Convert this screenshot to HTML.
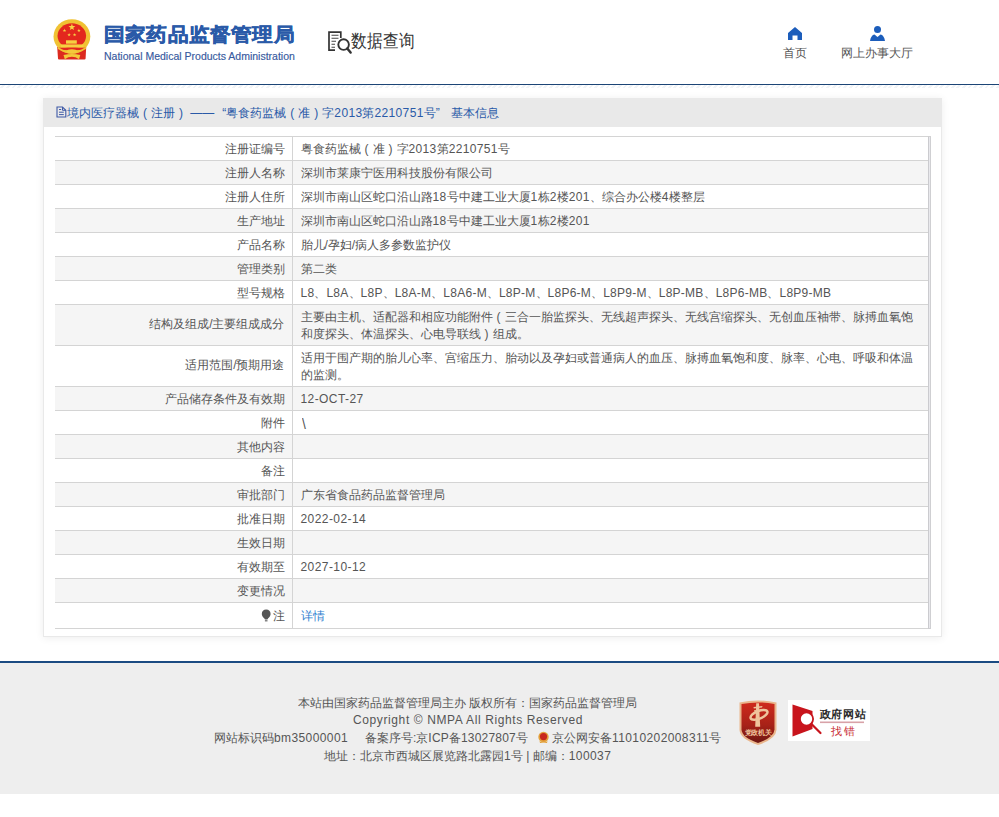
<!DOCTYPE html>
<html><head><meta charset="utf-8">
<style>
*{margin:0;padding:0;box-sizing:border-box}
html,body{width:999px;height:817px;overflow:hidden;background:#fff;font-family:"Liberation Sans",sans-serif;color:#555}
.abs{position:absolute}
#hdr{position:absolute;left:0;top:0;width:999px;height:84px;background:#fff}
#hline{position:absolute;left:0;top:84px;width:999px;height:1px;background:#1c4576}
#hstripe{position:absolute;left:0;top:85px;width:999px;height:3px;background:repeating-linear-gradient(135deg,#fff 0 2px,#f1f4f7 2px 4px)}
.title{left:104px;top:21px;font-size:21px;font-weight:bold;color:#2a5aa8;-webkit-text-stroke:0.5px #2a5aa8;letter-spacing:0.2px;white-space:nowrap;line-height:26px;transform:scaleY(0.92);transform-origin:0 23px}
.en{left:104px;top:50px;font-size:10.5px;color:#36599e;-webkit-text-stroke:0.15px #36599e;white-space:nowrap;line-height:13px}
.sj{left:351px;top:29px;font-size:16px;color:#333;white-space:nowrap;line-height:22px;transform:scaleY(1.15);transform-origin:0 0}
.nav{font-size:12px;color:#555;white-space:nowrap;line-height:14px}
#panel{position:absolute;left:43px;top:98px;width:899px;height:539px;background:#fff;border:1px solid #e9e9e9;border-top:0;box-shadow:0 1px 8px rgba(0,0,0,0.075)}
#ph{position:absolute;left:-1px;top:0;width:899px;height:29px;background:#e9e9e9}
#ptitle{position:absolute;left:23px;top:7px;font-size:12px;color:#2a5aa8;white-space:nowrap;line-height:16px}
#tbl{position:absolute;left:55px;top:136px;border-collapse:collapse;font-size:12px;color:#555}
#tbl td{border-top:1px solid #d4d4d4;border-bottom:1px solid #d4d4d4;line-height:17px;vertical-align:middle;padding-top:2px}
#tbl td.l{width:237px;text-align:right;padding-right:7px;border-right:1px solid #d4d4d4}
#tbl td.r{width:637px;padding-left:8px;padding-right:8px;border-right:1px solid #d4d4d4}
#tbl tr.g td{background:#f5f5f5}
#tbl tr.h24 td{height:24px}
#tbl tr.h41 td{height:41px}
#tbl tr.h41 td.l{padding-top:0;padding-bottom:1px}
#tbl tr.h26 td{height:26px}
#rstrip{position:absolute;left:928px;top:136px;width:3px;height:493px;background:#e9e9ed;border-left:1px solid #cbcbcf;border-right:1px solid #cfcfd2;border-bottom:1px solid #cfcfd2;border-top:1px solid #d2d2d2}
#foot{position:absolute;left:0;top:661px;width:999px;height:133px;background:#eeeeee;border-top:2px solid #1b4b82}
.ft{position:absolute;font-size:12px;color:#555;white-space:nowrap;line-height:18px}
.pl,.pr{display:inline-block;width:12px;text-align:center;font-style:normal}
.q1,.q2{display:inline-block;width:12px;font-style:normal}.q1{text-align:right}
b.n{font-weight:normal;letter-spacing:0.26px}b.d{font-weight:normal;letter-spacing:0.36px}
</style></head><body>
<div id="hdr">
  <!-- emblem -->
  <svg class="abs" style="left:48px;top:14px" width="48" height="50" viewBox="0 0 48 50">
    <path d="M9.2 33 L38.2 33 L37.6 44.5 Q37.5 45.5 36.5 45.5 L11 45.5 Q10 45.5 10 44.5 Z" fill="#dc2a1f"/>
    <ellipse cx="23.9" cy="22.5" rx="18.4" ry="17.3" fill="#f0c233"/>
    <ellipse cx="23.8" cy="21.8" rx="14.3" ry="12.6" fill="#e3281e"/>
    <polygon points="23.90,9.60 24.75,12.04 27.32,12.09 25.27,13.64 26.02,16.11 23.90,14.64 21.78,16.11 22.53,13.64 20.48,12.09 23.05,12.04" fill="#f6d445"/>
    <polygon points="16.50,14.60 16.95,15.89 18.31,15.91 17.22,16.73 17.62,18.04 16.50,17.26 15.38,18.04 15.78,16.73 14.69,15.91 16.05,15.89" fill="#f6d445"/>
    <polygon points="30.90,14.60 31.35,15.89 32.71,15.91 31.62,16.73 32.02,18.04 30.90,17.26 29.78,18.04 30.18,16.73 29.09,15.91 30.45,15.89" fill="#f6d445"/>
    <polygon points="21.10,18.90 21.55,20.19 22.91,20.21 21.82,21.03 22.22,22.34 21.10,21.56 19.98,22.34 20.38,21.03 19.29,20.21 20.65,20.19" fill="#f6d445"/>
    <polygon points="26.60,18.90 27.05,20.19 28.41,20.21 27.32,21.03 27.72,22.34 26.60,21.56 25.48,22.34 25.88,21.03 24.79,20.21 26.15,20.19" fill="#f6d445"/>
    <rect x="18" y="26.3" width="10.8" height="3.4" fill="#f6d040"/>
    <rect x="12.9" y="30.4" width="22.6" height="3.3" fill="#f6d040"/>
    <rect x="11" y="33.7" width="26" height="2.4" fill="#e3281e"/>
    <path d="M10 34 Q23.9 43 37.8 34" fill="none" stroke="#f0c233" stroke-width="1.8"/>
    <ellipse cx="23.9" cy="37.4" rx="5" ry="2.2" fill="#f3c93a"/>
    <path d="M15.5 41 Q23.9 39 32.3 41 L31 45.3 L27.5 43.2 Q23.9 42.4 20.3 43.2 L16.8 45.3 Z" fill="#f3c93a"/>
  </svg>
  <div class="abs title">国家药品监督管理局</div>
  <div class="abs en">National Medical Products Administration</div>
  <!-- data query icon -->
  <svg class="abs" style="left:327px;top:30px" width="25" height="25" viewBox="0 0 25 25">
    <path d="M13.8 8 V2.2 H2 V20.2 H8" fill="none" stroke="#333" stroke-width="1.7"/>
    <path d="M4.5 5.2 H11.5 M4.5 8.2 H11.5 M4.5 11.2 H9 M4.5 14.2 H8 M4.5 17.2 H8" stroke="#444" stroke-width="1.1"/>
    <circle cx="16.6" cy="14.6" r="5.3" fill="none" stroke="#333" stroke-width="1.9"/>
    <path d="M20.3 18.4 L23.6 22.6" stroke="#333" stroke-width="2.4" stroke-linecap="round"/>
  </svg>
  <div class="abs sj">数据查询</div>
  <!-- home -->
  <svg class="abs" style="left:788px;top:27px" width="14" height="13" viewBox="0 0 14 13">
    <path d="M7 0 L14 6 V13 H9.5 V8.5 H4.5 V13 H0 V6 Z" fill="#1c5dbb"/>
  </svg>
  <div class="abs nav" style="left:783px;top:46px">首页</div>
  <!-- person -->
  <svg class="abs" style="left:870px;top:26px" width="15" height="15" viewBox="0 0 15 15">
    <circle cx="7.5" cy="3.5" r="3.5" fill="#1c5dbb"/>
    <path d="M0 15 Q1 9 4.5 8.5 L7.5 11 L10.5 8.5 Q14 9 15 15 Z" fill="#1c5dbb"/>
  </svg>
  <div class="abs nav" style="left:841px;top:46px">网上办事大厅</div>
</div>
<div id="hline"></div>
<div id="hstripe"></div>

<div id="panel">
  <div id="ph"></div>
  <svg class="abs" style="left:12px;top:8px" width="11" height="12" viewBox="0 0 11 12">
    <path d="M1 1 H6.5 L9.8 4.3 V11 H1 Z" fill="none" stroke="#3f5aa6" stroke-width="1.1"/>
    <path d="M6.5 1 V4.3 H9.8" fill="none" stroke="#3f5aa6" stroke-width="1"/>
    <path d="M3 3.5 H5.2 M3 6.2 H7.8 M3 8.6 H7.8" stroke="#3f5aa6" stroke-width="1"/>
  </svg>
  <div id="ptitle">境内医疗器械<i class="pl">(</i>注册<i class="pr">)</i> ——<i class="q1">“</i>粤食药监械<i class="pl">(</i>准<i class="pr">)</i>字<b class="d">2013</b>第<b class="d">2210751</b>号<i class="q2">”</i> 基本信息</div>
</div>

<table id="tbl">
<tr class="h24"><td class="l">注册证编号</td><td class="r">粤食药监械<i class="pl">(</i>准<i class="pr">)</i>字<b class="d">2013</b>第<b class="d">2210751</b>号</td></tr>
<tr class="h24 g"><td class="l">注册人名称</td><td class="r">深圳市莱康宁医用科技股份有限公司</td></tr>
<tr class="h24"><td class="l">注册人住所</td><td class="r">深圳市南山区蛇口沿山路<b class="d">18</b>号中建工业大厦<b class="d">1</b>栋<b class="d">2</b>楼<b class="d">201</b>、综合办公楼<b class="d">4</b>楼整层</td></tr>
<tr class="h24 g"><td class="l">生产地址</td><td class="r">深圳市南山区蛇口沿山路<b class="d">18</b>号中建工业大厦<b class="d">1</b>栋<b class="d">2</b>楼<b class="d">201</b></td></tr>
<tr class="h24"><td class="l">产品名称</td><td class="r">胎儿/孕妇/病人多参数监护仪</td></tr>
<tr class="h24 g"><td class="l">管理类别</td><td class="r">第二类</td></tr>
<tr class="h24"><td class="l">型号规格</td><td class="r"><b class="n">L8</b>、<b class="n">L8A</b>、<b class="n">L8P</b>、<b class="n">L8A-M</b>、<b class="n">L8A6-M</b>、<b class="n">L8P-M</b>、<b class="n">L8P6-M</b>、<b class="n">L8P9-M</b>、<b class="n">L8P-MB</b>、<b class="n">L8P6-MB</b>、<b class="n">L8P9-MB</b></td></tr>
<tr class="h41 g"><td class="l">结构及组成/主要组成成分</td><td class="r">主要由主机、适配器和相应功能附件<i class="pl">(</i>三合一胎监探头、无线超声探头、无线宫缩探头、无创血压袖带、脉搏血氧饱和度探头、体温探头、心电导联线<i class="pr">)</i>组成。</td></tr>
<tr class="h41"><td class="l">适用范围/预期用途</td><td class="r">适用于围产期的胎儿心率、宫缩压力、胎动以及孕妇或普通病人的血压、脉搏血氧饱和度、脉率、心电、呼吸和体温的监测。</td></tr>
<tr class="h24 g"><td class="l">产品储存条件及有效期</td><td class="r" style="letter-spacing:0.42px">12-OCT-27</td></tr>
<tr class="h24"><td class="l">附件</td><td class="r"><span style="display:inline-block;transform:scale(1.15,1.2);transform-origin:0 60%;position:relative;top:1.5px;left:1px">\</span></td></tr>
<tr class="h24 g"><td class="l">其他内容</td><td class="r"></td></tr>
<tr class="h24"><td class="l">备注</td><td class="r"></td></tr>
<tr class="h24 g"><td class="l">审批部门</td><td class="r">广东省食品药品监督管理局</td></tr>
<tr class="h24"><td class="l">批准日期</td><td class="r" style="letter-spacing:0.42px">2022-02-14</td></tr>
<tr class="h24 g"><td class="l">生效日期</td><td class="r"></td></tr>
<tr class="h24"><td class="l">有效期至</td><td class="r" style="letter-spacing:0.42px">2027-10-12</td></tr>
<tr class="h24 g"><td class="l">变更情况</td><td class="r"></td></tr>
<tr class="h26"><td class="l"><svg width="11" height="13" viewBox="0 0 11 13" style="vertical-align:-2px;margin-right:1px"><path d="M5.2 0.6 C7.9 0.6 9.6 2.5 9.6 4.9 C9.6 6.9 8.3 8.1 7.2 9.3 L6.4 10.4 H4 L3.2 9.3 C2.1 8.1 0.8 6.9 0.8 4.9 C0.8 2.5 2.5 0.6 5.2 0.6 Z" fill="#555"/><rect x="3.9" y="11.2" width="2.6" height="1.2" fill="#666"/></svg>注</td><td class="r" style="color:#2f7fd0">详情</td></tr>
</table>
<div id="rstrip"></div>

<div id="foot">
  <div class="ft" style="left:298px;top:31px">本站由国家药品监督管理局主办 版权所有：国家药品监督管理局</div>
  <div class="ft" style="left:353px;top:48px;letter-spacing:0.61px">Copyright © NMPA All Rights Reserved</div>
  <div class="ft" style="left:214px;top:66px">网站标识码<span style="letter-spacing:0.4px">bm35000001</span></div>
  <div class="ft" style="left:365px;top:66px">备案序号:京<span style="letter-spacing:0.2px">ICP</span>备<span style="letter-spacing:0.2px">13027807</span>号</div>
  <svg class="abs" style="left:537px;top:68px" width="13" height="13" viewBox="0 0 13 13">
    <circle cx="6.5" cy="6" r="5.2" fill="#e3a13a"/>
    <circle cx="6.5" cy="5.6" r="3.6" fill="#c8281e"/>
    <path d="M2.5 10 Q6.5 13 10.5 10 L10 12 H3 Z" fill="#e3a13a"/>
  </svg>
  <div class="ft" style="left:552px;top:66px">京公网安备<span style="letter-spacing:0.4px">11010202008311</span>号</div>
  <div class="ft" style="left:324px;top:84px">地址：北京市西城区展览路北露园<span style="letter-spacing:0.3px">1</span>号 | 邮编：<span style="letter-spacing:0.4px">100037</span></div>
  <!-- dangzheng jiguan badge -->
  <svg class="abs" style="left:738px;top:36px" width="40" height="47" viewBox="0 0 40 47">
    <defs><linearGradient id="sg" x1="0" y1="0" x2="0" y2="1"><stop offset="0" stop-color="#cf2a1c"/><stop offset="0.55" stop-color="#a82218"/><stop offset="1" stop-color="#6e1712"/></linearGradient></defs>
    <path d="M1.5 3.5 Q20 -0.5 38.5 3.5 L38.5 31 Q38 40 20 46 Q2 40 1.5 31 Z" fill="#eab68c"/>
    <path d="M3.5 5 Q20 1.8 36.5 5 L36.5 30.5 Q36 38.5 20 44 Q4 38.5 3.5 30.5 Z" fill="url(#sg)"/>
    <path d="M18.2 4.2 L21 4.2 L22.2 27.8 L17.2 27.8 Z" fill="#efc49c"/>
    <path d="M15.5 8 L24.5 7 L24 8.6 L15.8 9.4 Z M16 11.2 L23.5 10.4 L23.2 11.8 L16.2 12.6 Z" fill="#efc49c"/>
    <ellipse cx="21" cy="15.8" rx="9" ry="3.8" transform="rotate(-22 21 15.8)" fill="none" stroke="#efc49c" stroke-width="2.5"/>
    <text x="20.2" y="36.4" font-size="6.6" letter-spacing="-0.2" font-weight="900" fill="#efc49c" text-anchor="middle" font-family="Liberation Sans, sans-serif">党政机关</text>
  </svg>
  <!-- gov website find error -->
  <div class="abs" style="left:788px;top:37px;width:82px;height:41px;background:#fff"></div>
  <svg class="abs" style="left:788px;top:37px" width="82" height="41" viewBox="0 0 82 41">
    <path d="M4.5 4.5 L24.5 11 L24.5 29 L4.5 36.5 Z" fill="#c8141c"/>
    <circle cx="18.5" cy="19" r="6.6" fill="#fff" stroke="#c8141c" stroke-width="1.8"/>
    <path d="M23.5 24 L32.5 33" stroke="#c8141c" stroke-width="2.2" stroke-linecap="round"/>
    <text x="31.5" y="17.8" font-size="10.5" font-weight="bold" fill="#2a2a2a" font-family="Liberation Sans, sans-serif" letter-spacing="0.7">政府网站</text>
    <rect x="32" y="21.5" width="44" height="1.6" fill="#d8a2a8"/>
    <text x="42.5" y="34.5" font-size="10.5" fill="#c82a30" font-family="Liberation Sans, sans-serif" letter-spacing="2">找错</text>
  </svg>
</div>
</body></html>
